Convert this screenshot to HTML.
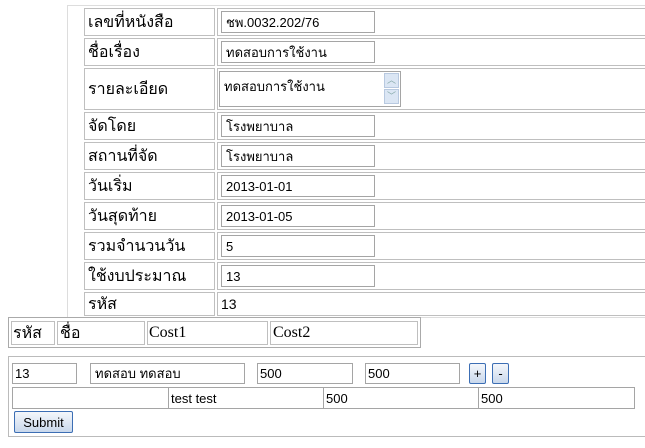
<!DOCTYPE html>
<html><head><meta charset="utf-8"><style>
*{box-sizing:border-box;margin:0;padding:0}
body{width:645px;height:448px;background:#fff;position:relative;overflow:hidden;font-family:"Liberation Sans",Tahoma,sans-serif;color:#000}
.a{position:absolute}
.c{position:absolute;border:1px solid #bfbfbf;}
.lbl{font-size:16px;padding-left:3px;display:flex;align-items:center}
.in{position:absolute;border:1px solid #a5a5a5;background:#fff;font-size:13px;padding-left:4px;display:flex;align-items:center}
.ser{font-family:"Liberation Serif",serif;font-size:16px}
.btn{position:absolute;border:1px solid #3c6eb4;border-radius:2px;background:linear-gradient(#f4f7fb,#c9d8ec);font-size:13px;display:flex;align-items:center;justify-content:center}
</style></head><body>
<div class="c" style="left:67px;top:5px;width:600px;height:313px;border-color:#ddd"></div>

<div class="c lbl" style="left:84px;top:8px;width:131px;height:28px">เลขที่หนังสือ</div>
<div class="c" style="left:217px;top:8px;width:440px;height:28px"></div>
<div class="in" style="left:221px;top:11px;width:154px;height:22px">ชพ.0032.202/76</div>

<div class="c lbl" style="left:84px;top:38px;width:131px;height:28px">ชื่อเรื่อง</div>
<div class="c" style="left:217px;top:38px;width:440px;height:28px"></div>
<div class="in" style="left:221px;top:41px;width:154px;height:22px">ทดสอบการใช้งาน</div>

<div class="c lbl" style="left:84px;top:68px;width:131px;height:42px">รายละเอียด</div>
<div class="c" style="left:217px;top:68px;width:440px;height:42px"></div>
<div class="in" style="left:219px;top:71px;width:182px;height:36px;align-items:flex-start;padding-top:4px">ทดสอบการใช้งาน</div>
<div class="a" style="left:384px;top:73px;width:15px;height:15px;background:#dbe6f4;border:1px solid #b8c9e0;font-size:9px;color:#8aa;text-align:center;line-height:13px">︿</div>
<div class="a" style="left:384px;top:89px;width:15px;height:15px;background:#dbe6f4;border:1px solid #b8c9e0;font-size:9px;color:#8aa;text-align:center;line-height:13px">﹀</div>

<div class="c lbl" style="left:84px;top:112px;width:131px;height:28px">จัดโดย</div>
<div class="c" style="left:217px;top:112px;width:440px;height:28px"></div>
<div class="in" style="left:221px;top:115px;width:154px;height:22px">โรงพยาบาล</div>

<div class="c lbl" style="left:84px;top:142px;width:131px;height:28px">สถานที่จัด</div>
<div class="c" style="left:217px;top:142px;width:440px;height:28px"></div>
<div class="in" style="left:221px;top:145px;width:154px;height:22px">โรงพยาบาล</div>

<div class="c lbl" style="left:84px;top:172px;width:131px;height:28px">วันเริ่ม</div>
<div class="c" style="left:217px;top:172px;width:440px;height:28px"></div>
<div class="in" style="left:221px;top:175px;width:154px;height:22px">2013-01-01</div>

<div class="c lbl" style="left:84px;top:202px;width:131px;height:28px">วันสุดท้าย</div>
<div class="c" style="left:217px;top:202px;width:440px;height:28px"></div>
<div class="in" style="left:221px;top:205px;width:154px;height:22px">2013-01-05</div>

<div class="c lbl" style="left:84px;top:232px;width:131px;height:28px">รวมจำนวนวัน</div>
<div class="c" style="left:217px;top:232px;width:440px;height:28px"></div>
<div class="in" style="left:221px;top:235px;width:154px;height:22px">5</div>

<div class="c lbl" style="left:84px;top:262px;width:131px;height:28px">ใช้งบประมาณ</div>
<div class="c" style="left:217px;top:262px;width:440px;height:28px"></div>
<div class="in" style="left:221px;top:265px;width:154px;height:22px">13</div>

<div class="c lbl" style="left:84px;top:292px;width:131px;height:24px">รหัส</div>
<div class="c lbl" style="left:217px;top:292px;width:440px;height:24px;font-size:14px">13</div>

<div class="c" style="left:8px;top:317px;width:413px;height:31px;border-color:#aaa"></div>
<div class="c lbl ser" style="left:11px;top:321px;width:44px;height:24px;padding-left:1px">รหัส</div>
<div class="c lbl ser" style="left:57px;top:321px;width:88px;height:24px;padding-left:2px">ชื่อ</div>
<div class="c lbl ser" style="left:147px;top:321px;width:121px;height:24px;padding-left:1px">Cost1</div>
<div class="c lbl ser" style="left:270px;top:321px;width:148px;height:24px;padding-left:2px">Cost2</div>

<div class="c" style="left:8px;top:356px;width:650px;height:81px;border-color:#bbb"></div>
<div class="in" style="left:12px;top:363px;width:65px;height:21px;padding-left:2px">13</div>
<div class="in" style="left:90px;top:363px;width:155px;height:21px">ทดสอบ ทดสอบ</div>
<div class="in" style="left:257px;top:363px;width:96px;height:21px;padding-left:2px">500</div>
<div class="in" style="left:365px;top:363px;width:95px;height:21px;padding-left:2px">500</div>
<div class="btn" style="left:469px;top:363px;width:17px;height:21px">+</div>
<div class="btn" style="left:492px;top:363px;width:17px;height:21px">-</div>
<div class="in" style="left:12px;top:387px;width:158px;height:22px"></div>
<div class="in" style="left:168px;top:387px;width:157px;height:22px;padding-left:2px">test test</div>
<div class="in" style="left:323px;top:387px;width:157px;height:22px;padding-left:2px">500</div>
<div class="in" style="left:478px;top:387px;width:157px;height:22px;padding-left:2px">500</div>
<div class="btn" style="left:14px;top:411px;width:59px;height:22px">Submit</div>
</body></html>
